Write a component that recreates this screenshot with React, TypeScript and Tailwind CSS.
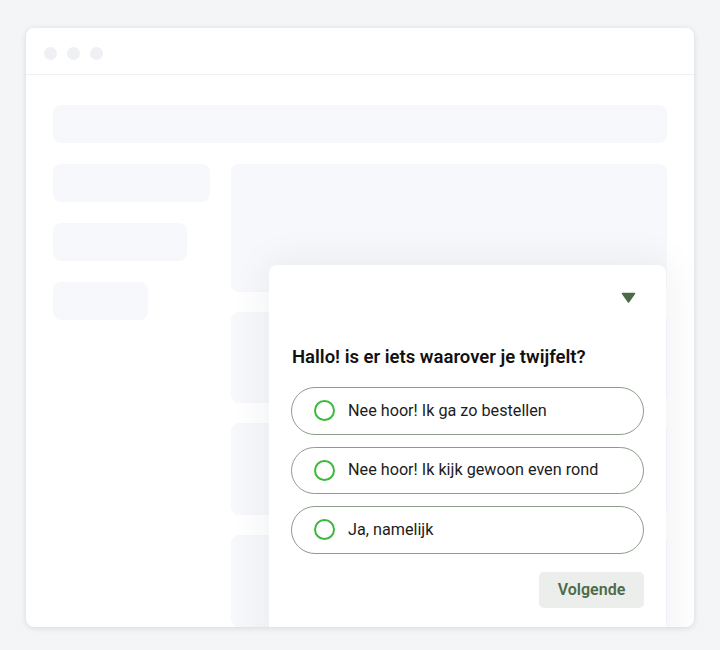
import React from 'react';

const options = ['Nee hoor! Ik ga zo bestellen', 'Nee hoor! Ik kijk gewoon even rond', 'Ja, namelijk'];

export default function App() {
  return (
    <div className="min-h-[650px] w-[720px] bg-[#f4f5f7] pt-[28px] pl-[26px]" style={{ fontFamily: 'Roboto, "Liberation Sans", sans-serif' }}>
      {/* browser window */}
      <div className="w-[668px] h-[599px] bg-white rounded-lg shadow-[0_1px_6px_rgba(0,0,0,0.12)] overflow-hidden flex flex-col">
        <div className="h-[47px] shrink-0 border-b border-[#eef0f3] flex items-center gap-[10px] pl-[18px] pt-[4px]">
          <span className="w-[13px] h-[13px] rounded-full bg-[#eef0f4]" />
          <span className="w-[13px] h-[13px] rounded-full bg-[#eef0f4]" />
          <span className="w-[13px] h-[13px] rounded-full bg-[#eef0f4]" />
        </div>

        <div className="relative flex-1 px-[27px] pt-[30px]">
          <div className="h-[38px] rounded-lg bg-[#f7f8fb]" />
          <div className="mt-[21px] flex gap-[21px]">
            <div className="w-[157px] flex flex-col gap-[21px]">
              <div className="h-[38px] w-[157px] rounded-lg bg-[#f7f8fb]" />
              <div className="h-[38px] w-[134px] rounded-lg bg-[#f7f8fb]" />
              <div className="h-[38px] w-[95px] rounded-lg bg-[#f7f8fb]" />
            </div>
            <div className="flex-1 flex flex-col gap-[20px]">
              <div className="h-[128px] rounded-lg bg-[#f7f8fb]" />
              <div className="h-[91px] rounded-lg bg-[#f7f8fb]" />
              <div className="h-[92px] rounded-lg bg-[#f7f8fb]" />
              <div className="h-[92px] rounded-lg bg-[#f7f8fb]" />
            </div>
          </div>

          {/* chat panel overlay */}
          <div className="absolute left-[243px] top-[190px] w-[397px] h-[400px] bg-white rounded-lg shadow-[0_0_40px_rgba(30,40,60,0.08)] pl-[22px] pr-[22px]">
            <div className="flex justify-end pt-[27px] pr-[8px]">
              <svg width="15" height="11" viewBox="0 0 15 11">
                <path d="M1.5 1.5 H13.5 L7.5 10 Z" fill="#4c6a47" stroke="#4c6a47" strokeWidth="1.5" strokeLinejoin="round" />
              </svg>
            </div>
            <h2 className="mt-[44px] pl-[1px] text-[18.5px] leading-[20px] font-semibold text-[#111]">Hallo! is er iets waarover je twijfelt?</h2>
            <div className="mt-[20px] flex flex-col gap-[12px]">
              {options.map((o) => (
                <div key={o} className="h-[47.5px] rounded-full border border-[#8e9d8b] flex items-center pl-[22px]">
                  <span className="w-[21px] h-[21px] rounded-full border-2 border-[#3cb83c]" />
                  <span className="ml-[13px] text-[16.2px] text-[#1c1c1c]">{o}</span>
                </div>
              ))}
            </div>
            <div className="mt-[18px] flex justify-end">
              <button className="h-[36px] w-[105px] rounded-[5px] bg-[#eceeeb] text-[16px] font-semibold text-[#4e6b4a]">Volgende</button>
            </div>
          </div>
        </div>
      </div>
    </div>
  );
}
